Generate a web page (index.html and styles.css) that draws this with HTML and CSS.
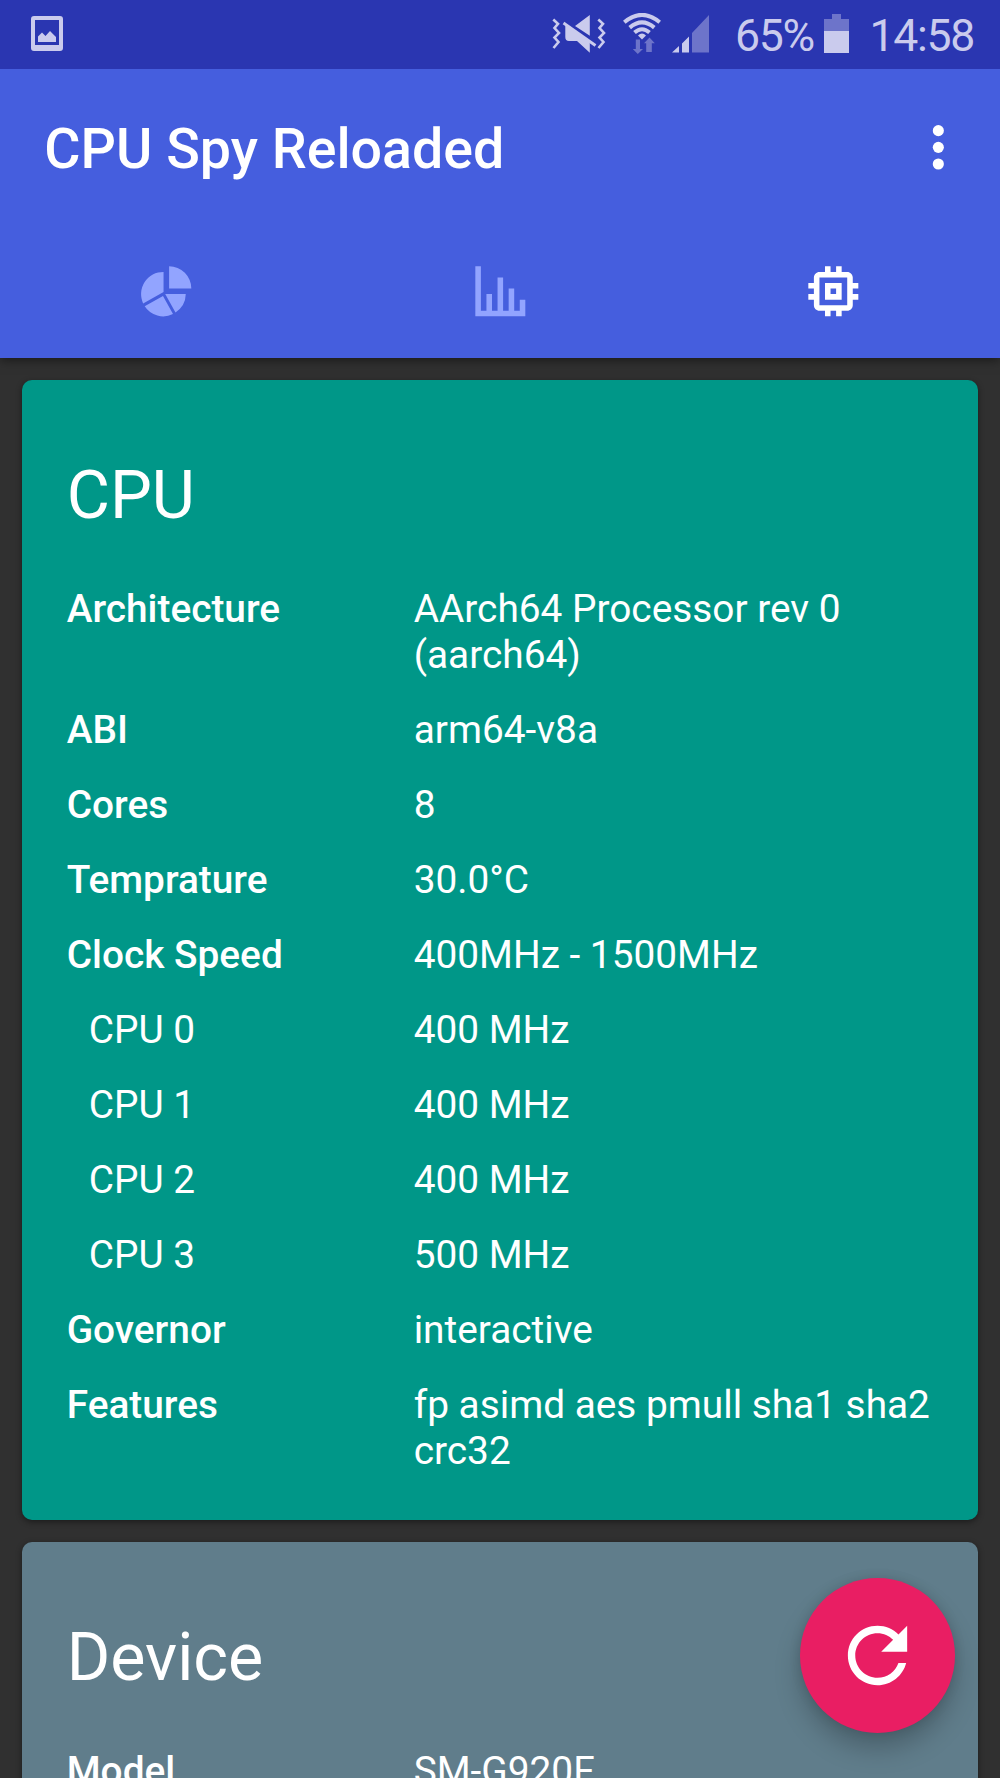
FILE: index.html
```html
<!DOCTYPE html>
<html lang="en">
<head>
<meta charset="utf-8">
<title>CPU Spy Reloaded</title>
<link rel="stylesheet" href="styles.css">
</head>
<body>
<div class="screen">
  <header class="header">
    <div class="status-bar">
      <svg class="status-photo" viewBox="0 0 32 35" fill="currentColor"><path fill-rule="evenodd" d="M3 0H29a3 3 0 0 1 3 3V32a3 3 0 0 1-3 3H3a3 3 0 0 1-3-3V3a3 3 0 0 1 3-3ZM4 4V29H28V4Z"/><path d="M7 26V20.5L11 16.5L14.5 20L19 15L25 21V26Z"/></svg>
      <div class="status-right">
        <svg class="status-mute" viewBox="0 0 54 38" fill="currentColor"><g fill="none" stroke="currentColor" stroke-width="2.6"><path d="M1.3 4.5L6 8.8L2.5 13L7 18L2.5 22.5L6.5 27L1.5 33"/><path d="M46.3 4.5L51 8.8L47.5 13L52 18L47.5 22.5L51.5 27L46.5 33"/></g><path d="M23 11L37.8 0V20.7ZM13.3 9.3L37.8 26.5V37.7L25 26H17Q13.3 26 13.3 22Z"/><path fill="none" stroke="currentColor" stroke-width="2.8" d="M11.5 8L43.5 30.5"/></svg>
        <svg class="status-wifi" viewBox="0 0 38 42" fill="none" stroke="currentColor"><g stroke-width="4"><path d="M1.3 9.2Q19 -5.5 36.7 9.2"/><path d="M6.7 14.6Q19 4.2 31.3 14.6"/><path d="M11.5 19.5Q19 13 26.5 19.5"/></g><path fill="currentColor" stroke="none" d="M15 22.5Q19 18.5 23 22.5L19 26.5Z"/><path fill="currentColor" fill-opacity=".42" stroke="none" d="M12.8 26.5H17V36H20L14.8 41L9.8 36H12.8ZM26.5 24.5L31.8 30.2H28.8V39H23.2V30.2H21Z"/></svg>
        <svg class="status-signal" viewBox="0 0 38 38" fill="currentColor"><path d="M0 37.5L7 31V37.5ZM10 28.5L17 21.5V37.5H10Z"/><path fill-opacity=".42" d="M20 18L37 0V37.5H20Z"/></svg>
        <span class="status-text percent">65%</span>
        <svg class="status-battery" viewBox="0 0 25 39" fill="currentColor"><path fill-opacity=".42" d="M8 0H17V5H25V17H0V5H8Z"/><path d="M0 17H25V39H0Z"/></svg>
        <span class="status-text">14:58</span>
      </div>
    </div>
    <div class="toolbar">
      <h1 class="app-title">CPU Spy Reloaded</h1>
      <svg class="icon" viewBox="0 0 24 24" fill="currentColor"><circle cx="12" cy="6" r="2"/><circle cx="12" cy="12" r="2"/><circle cx="12" cy="18" r="2"/></svg>
    </div>
    <nav class="tabs">
      <div class="tab"><svg class="icon" viewBox="0 0 24 24" fill="currentColor"><path d="M13 3V11H21A8 8 0 0 0 13 3ZM11 5A8 8 0 0 0 3.65 16.35L11 12.2ZM11.6 13L15.3 19.6A8 8 0 0 0 19 13ZM10.8 13.7L4.2 17.4A8 8 0 0 0 14.4 20.2Z"/></svg></div>
      <div class="tab"><svg class="icon" viewBox="0 0 24 24" fill="currentColor"><path d="M3 3H5V19H7V13H9V19H11V7H13V19H15V11H17V19H19V15H21V21H3Z"/></svg></div>
      <div class="tab tab-active"><svg class="icon" viewBox="0 0 24 24" fill="currentColor"><path d="M15 9H9v6h6V9zm-2 4h-2v-2h2v2zm8-2V9h-2V7c0-1.1-.9-2-2-2h-2V3h-2v2h-2V3H9v2H7c-1.1 0-2 .9-2 2v2H3v2h2v2H3v2h2v2c0 1.1.9 2 2 2h2v2h2v-2h2v2h2v-2h2c1.1 0 2-.9 2-2v-2h2v-2h-2v-2h2zm-4 6H7V7h10v10z"/></svg></div>
    </nav>
  </header>
  <main class="cards">
    <section class="card card-cpu">
      <h2 class="card-title">CPU</h2>
      <dl class="specs">
        <dt>Architecture</dt><dd>AArch64 Processor rev 0 (aarch64)</dd>
        <dt>ABI</dt><dd>arm64-v8a</dd>
        <dt>Cores</dt><dd>8</dd>
        <dt>Temprature</dt><dd>30.0°C</dd>
        <dt>Clock Speed</dt><dd>400MHz - 1500MHz</dd>
        <dt class="sub">CPU 0</dt><dd>400 MHz</dd>
        <dt class="sub">CPU 1</dt><dd>400 MHz</dd>
        <dt class="sub">CPU 2</dt><dd>400 MHz</dd>
        <dt class="sub">CPU 3</dt><dd>500 MHz</dd>
        <dt>Governor</dt><dd>interactive</dd>
        <dt>Features</dt><dd>fp asimd aes pmull sha1 sha2 crc32</dd>
      </dl>
    </section>
    <section class="card card-device">
      <h2 class="card-title">Device</h2>
      <dl class="specs">
        <dt>Model</dt><dd>SM-G920F</dd>
      </dl>
    </section>
  </main>
  <button class="fab" aria-label="Refresh"><svg class="fab-icon" viewBox="0 0 24 24" fill="currentColor"><path d="M17.65 6.35C16.2 4.9 14.21 4 12 4c-4.42 0-7.99 3.58-7.99 8s3.57 8 7.99 8c3.73 0 6.84-2.55 7.73-6h-2.08c-.82 2.33-3.04 4-5.65 4-3.31 0-6-2.69-6-6s2.69-6 6-6c1.66 0 3.14.69 4.22 1.78L13 11h7V4z"/></svg></button>
</div>
</body>
</html>
```
FILE: styles.css
```css
* { box-sizing: border-box; }
body { margin: 0; background: #303030; font-family: Roboto, sans-serif; color: #fff; }
svg { display: block; flex: none; }
h1, h2, dl, dd { margin: 0; }

.screen { position: relative; width: 1000px; height: 1778px; overflow: hidden; }

.header { position: relative; height: 358px; background: #455ede; box-shadow: 0 2px 10px rgba(0, 0, 0, .5); }
.status-bar { display: flex; justify-content: space-between; height: 69px; padding: 0 26px 0 31px; background: #2a36b1; color: #cacbed; }
.status-photo { width: 32px; height: 35px; margin-top: 16px; }
.status-right { display: flex; align-items: flex-start; }
.status-mute { width: 54px; height: 38px; margin: 15px 17px 0 0; }
.status-wifi { width: 38px; height: 42px; margin: 13px 11px 0 0; }
.status-signal { width: 38px; height: 38px; margin: 15px 25px 0 0; }
.status-battery { width: 25px; height: 39px; margin: 14px 20px 0 0; }
.status-text { font-size: 44.6px; line-height: 52px; letter-spacing: -1.3px; margin-top: 10px; }
.percent { margin-right: 10.5px; }

.toolbar { display: flex; align-items: center; justify-content: space-between; height: 156px; padding: 0 28px 0 44.3px; }
.app-title { padding-top: 4px; font-size: 55.56px; font-weight: 500; line-height: 66px; }
.icon { width: 66.67px; height: 66.67px; }
.tabs { display: grid; grid-template-columns: repeat(3, 1fr); height: 133px; }
.tab { display: flex; align-items: center; justify-content: center; color: #92a4ff; }
.tab-active { color: #fff; }

.cards { display: flex; flex-direction: column; gap: 22px; padding: 22px 22.2px 0; }
.card { height: 1140px; flex: none; padding: 76px 40px 0 44.5px; border-radius: 10px; box-shadow: 0 2px 6px rgba(0, 0, 0, .45); }
.card-cpu { background: #009788; }
.card-device { background: #607d8b; }
.card-title { font-size: 66.4px; font-weight: 400; line-height: 78px; margin-bottom: 52.4px; }
.specs { display: grid; grid-template-columns: 347px 1fr; row-gap: 29px; font-size: 38.8px; line-height: 46px; }
dt { font-weight: 500; }
.sub { padding-left: 22px; font-weight: 400; }

.fab { position: absolute; right: 44.8px; bottom: 44.8px; width: 155px; height: 155px; display: grid; place-items: center; padding: 0; border: 0; border-radius: 50%; background: #e91e63; color: #fff; box-shadow: 0 16px 26px rgba(0, 0, 0, .22), 0 0 12px rgba(0, 0, 0, .12); }
.fab-icon { width: 89px; height: 89px; }
```
